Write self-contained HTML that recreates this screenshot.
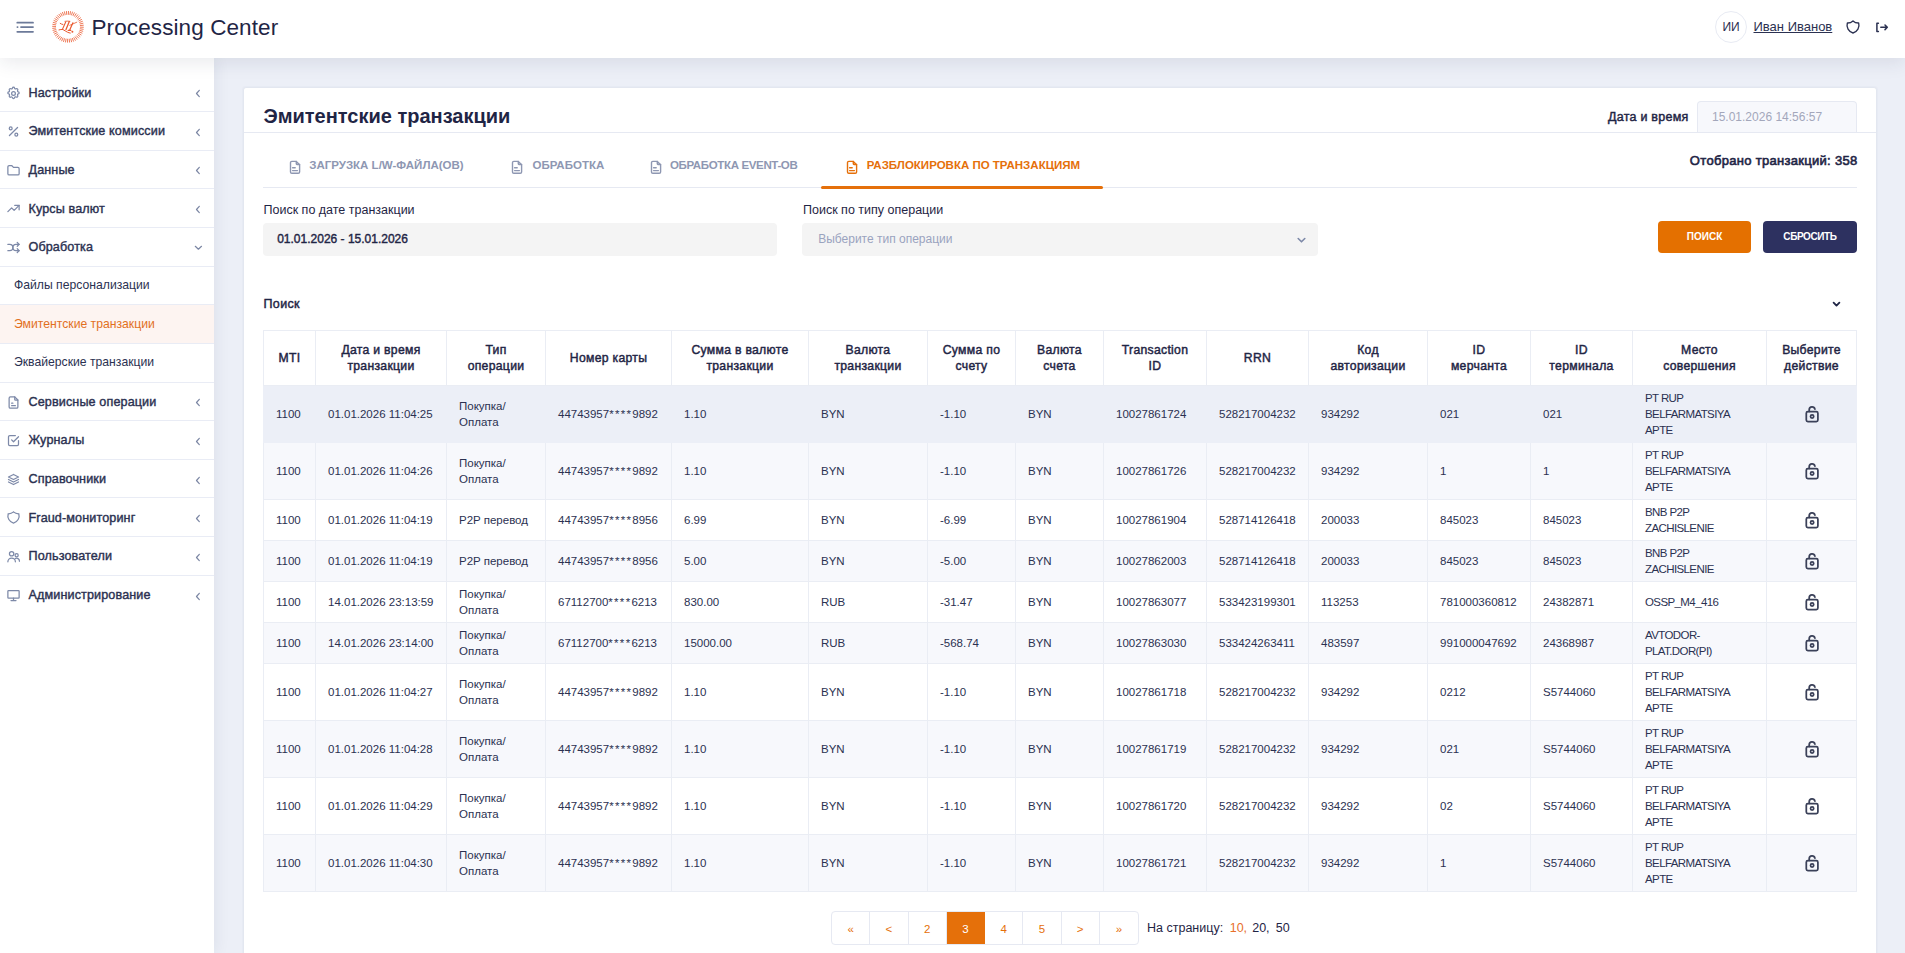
<!DOCTYPE html>
<html><head><meta charset="utf-8">
<style>
*{box-sizing:border-box;margin:0;padding:0}
html,body{width:1905px;height:953px;overflow:hidden}
body{font-family:"Liberation Sans",sans-serif;background:#eceff7;color:#2b3151;position:relative}
svg{display:block}
.abs{position:absolute}
.hdr{position:absolute;left:0;top:0;width:1905px;height:58px;background:#fff;z-index:3;box-shadow:0 4px 18px rgba(30,40,65,.10)}
.side{position:absolute;left:0;top:58px;width:214px;height:895px;background:#fff;z-index:2;box-shadow:2px 0 14px rgba(30,40,65,.07);padding-top:15.4px}
.si{position:relative;height:38.65px;border-bottom:1px solid #e9ecf5}
.si.last{border-bottom:none}
.si .ic{position:absolute;left:6px;top:12px}
.si .st{position:absolute;left:28.5px;top:1.2px;letter-spacing:.12px;line-height:37.65px;font-size:12.6px;font-weight:400;-webkit-text-stroke:.4px #2b3151;color:#2b3151;white-space:nowrap}
.si .chev{position:absolute;left:194.5px;top:15.8px}
.si .chevd{position:absolute;left:193.7px;top:16.8px}
.si.sub .sst{position:absolute;left:14px;top:0.5px;line-height:37.65px;font-size:12.2px;color:#2b3151;white-space:nowrap}
.si.act{background:#fdf4f1}
.si.act .sst{color:#e2701e}
.card{position:absolute;left:243px;top:87px;width:1634px;height:900px;background:#fff;border:1px solid #e3e7f0;border-radius:3px;box-shadow:0 0 0 1px rgba(228,232,241,.6)}
.chd{position:absolute;left:0;top:0;width:1632px;height:44.5px;border-bottom:1px solid #e6e9f2}
.title{position:absolute;left:19.5px;top:16px;font-size:20px;line-height:24px;font-weight:700;color:#1f2545;white-space:nowrap}
.dlab{position:absolute;left:1364px;top:21px;font-size:12.5px;letter-spacing:.25px;line-height:16px;font-weight:400;-webkit-text-stroke:.45px #1f2545;color:#1f2545;white-space:nowrap}
.dinp{position:absolute;left:1453px;top:13px;width:160px;height:31px;background:#f7f8fc;border:1px solid #e6e9f2;border-bottom:none;border-radius:4px 4px 0 0;font-size:12px;line-height:30px;padding-left:14px;color:#a3a7bb}
.tabs{position:absolute;left:19.5px;top:54px;width:1594px;height:47px;border-bottom:1px solid #e6e9f2;display:flex}
.tabt{position:absolute;top:69.1px;line-height:16px;font-size:11.5px;font-weight:700;white-space:nowrap}
.tabX{position:relative;height:46px;display:flex;align-items:center;padding:0 24.5px 0 25px;gap:7px;font-size:11.5px;font-weight:700;color:#8e97b2;white-space:nowrap}
.tab svg{margin-top:2px}
.tab.on{color:#e5700a}
.tab.on:after{content:"";position:absolute;left:0;right:0;bottom:-2px;height:3px;border-radius:2px;background:#e5700a}
.count{position:absolute;right:18.5px;top:65px;font-size:13px;letter-spacing:.3px;line-height:16px;font-weight:400;-webkit-text-stroke:.6px #1f2545;color:#1f2545;white-space:nowrap}
.flab{position:absolute;top:113.5px;font-size:12.5px;line-height:16px;color:#1f2545;white-space:nowrap}
.finp{position:absolute;top:135.1px;height:32.6px;background:#f4f4f4;border-radius:4px;font-size:12px;line-height:32.8px;white-space:nowrap}
.btn{position:absolute;top:133px;width:93px;height:32px;border-radius:4px;color:#fff;font-size:10px;font-weight:700;text-align:center;line-height:32px}
.ptitle{position:absolute;left:19.5px;top:208px;font-size:12.5px;letter-spacing:.35px;line-height:16px;font-weight:400;-webkit-text-stroke:.45px #1f2545;color:#1f2545}
.tbl{position:absolute;left:19px;top:242px;border-collapse:collapse;table-layout:fixed;width:1594px}
.tbl th,.tbl td{border:1px solid #eaedf4}
.tbl th{height:55px;font-size:12.2px;letter-spacing:.3px;line-height:16px;font-weight:400;-webkit-text-stroke:.45px #1f2545;color:#1f2545;text-align:center;padding:0 4px;background:#fff}
.tbl td{font-size:11.5px;line-height:16px;color:#2b3151;padding:0 12px;text-align:left;vertical-align:middle;white-space:nowrap}
.tbl tr.hov td{background:#eceff7;border-color:#eceff7}
.tbl tr.odd td{background:#f7f8fc}
.tbl tr.even td{background:#fff}
.tbl td.lk{padding:0}
.tbl td:nth-child(14){letter-spacing:-.6px}
.ast{letter-spacing:1.3px}
.pag{position:absolute;left:587px;top:823px;display:flex;height:34px;border:1px solid #e6e9f2;border-radius:4px}
.pag div{width:38.25px;height:32px;border-right:1px solid #e6e9f2;color:#e5700a;font-size:11.5px;line-height:34px;text-align:center}
.pag div:last-child{border-right:none}
.pag div.cur{background:#e5700a;color:#fff;border-color:#e5700a}
.per{position:absolute;top:832px;font-size:12.5px;line-height:16px;color:#1f2545;white-space:nowrap}
</style></head>
<body>
<div class="hdr">
  <svg class="abs" style="left:16px;top:21px" width="19" height="13" viewBox="0 0 19 13" fill="none" stroke="#6c7a99" stroke-width="1.8" stroke-linecap="round">
    <path d="M1.3 1.7H17M5 6.1H17M1.3 10.8H17M1.4 6.1H1.6"/>
  </svg>
  <svg class="abs" style="left:52px;top:11px" width="32" height="32" viewBox="0 0 32 32" fill="none" stroke="#ea5a30">
    <path d="M27.99 16.16L31.79 16.27M27.85 17.72L31.60 18.33M27.49 19.25L31.13 20.35M26.94 20.72L30.41 22.28M26.21 22.11L29.44 24.11M25.30 23.39L28.24 25.79M24.23 24.54L26.83 27.30M23.02 25.54L25.24 28.62M21.69 26.37L23.49 29.71M20.26 27.02L21.61 30.57M18.76 27.48L19.63 31.18M17.21 27.74L17.59 31.52M15.64 27.79L15.53 31.59M14.08 27.65L13.47 31.40M12.55 27.29L11.45 30.93M11.08 26.74L9.52 30.21M9.69 26.01L7.69 29.24M8.41 25.10L6.01 28.04M7.26 24.03L4.50 26.63M6.26 22.82L3.18 25.04M5.43 21.49L2.09 23.29M4.78 20.06L1.23 21.41M4.32 18.56L0.62 19.43M4.06 17.01L0.28 17.39M4.01 15.44L0.21 15.33M4.15 13.88L0.40 13.27M4.51 12.35L0.87 11.25M5.06 10.88L1.59 9.32M5.79 9.49L2.56 7.49M6.70 8.21L3.76 5.81M7.77 7.06L5.17 4.30M8.98 6.06L6.76 2.98M10.31 5.23L8.51 1.89M11.74 4.58L10.39 1.03M13.24 4.12L12.37 0.42M14.79 3.86L14.41 0.08M16.36 3.81L16.47 0.01M17.92 3.95L18.53 0.20M19.45 4.31L20.55 0.67M20.92 4.86L22.48 1.39M22.31 5.59L24.31 2.36M23.59 6.50L25.99 3.56M24.74 7.57L27.50 4.97M25.74 8.78L28.82 6.56M26.57 10.11L29.91 8.31M27.22 11.54L30.77 10.19M27.68 13.04L31.38 12.17M27.94 14.59L31.72 14.21" stroke-width="0.9" opacity=".9"/>
    <g stroke-linecap="round" stroke-linejoin="round">
    <path d="M8.2 12.4q1.3.9 2.7 1.1" stroke-width="1"/>
    <path d="M13 10.3c1.5-.3 3.2-.2 4.9 0" stroke-width=".9"/>
    <path d="M13.6 11.2L10.4 18.4" stroke-width="1.1"/>
    <path d="M17.3 10.6L14 18.6" stroke-width="1.3"/>
    <path d="M20.9 11.8L17.6 19.3M16.2 19.4h2.6" stroke-width="1.2"/>
    <path d="M17.8 14.3L24.8 11.2" stroke-width=".8"/>
    <path d="M7 18.9c1.3-.4 2.6-.6 3.9-.4 1.6.8 3 2 4.6 2.7 1 .4 1.9.8 2.8.9" stroke-width="1"/>
    <circle cx="20.4" cy="20.7" r="1" fill="#ea5a30" stroke="none"/>
    </g>
  </svg>
  <div class="abs" style="left:91.5px;top:14.5px;font-size:22.5px;line-height:26px;letter-spacing:.1px;color:#1f2545">Processing Center</div>
  <div class="abs" style="left:1715px;top:11px;width:32px;height:32px;border:1px solid #e8ebf3;border-radius:50%;font-size:12px;line-height:30px;text-align:center;color:#2b3151">ИИ</div>
  <div class="abs" style="left:1753.5px;top:19px;font-size:13px;line-height:16px;color:#2b3151;text-decoration:underline;white-space:nowrap">Иван Иванов</div>
  <svg class="abs" style="left:1845px;top:19px" width="16" height="16" viewBox="0 0 24 24" fill="none" stroke="#2b3151" stroke-width="2" stroke-linecap="round" stroke-linejoin="round"><path d="M12 3a12 12 0 0 0 8.5 3A12 12 0 0 1 12 21 12 12 0 0 1 3.5 6 12 12 0 0 0 12 3"/></svg>
  <svg class="abs" style="left:1875px;top:20px" width="15" height="14" viewBox="0 0 15 14" fill="none" stroke="#2b3151" stroke-width="1.5" stroke-linecap="round" stroke-linejoin="round"><path d="M3.4 3.2H1.9v8.3h1.5M5.8 7.3h6.4M10 5l2.3 2.3-2.3 2.3"/></svg>
</div>
<div class="side">
<div class="si"><span class="ic" style="top:13px"><svg width="15" height="15" viewBox="0 0 24 24" fill="none" stroke="#7d89a8" stroke-width="2" stroke-linecap="round" stroke-linejoin="round" ><path d="M10.3 3.3c.4-1.8 3-1.8 3.4 0a1.7 1.7 0 0 0 2.6 1.1c1.5-.9 3.3.8 2.4 2.4a1.7 1.7 0 0 0 1 2.5c1.8.4 1.8 3 0 3.4a1.7 1.7 0 0 0-1 2.6c.9 1.5-.8 3.3-2.4 2.4a1.7 1.7 0 0 0-2.6 1c-.4 1.8-3 1.8-3.4 0a1.7 1.7 0 0 0-2.5-1c-1.6.9-3.3-.8-2.4-2.4a1.7 1.7 0 0 0-1.1-2.6c-1.8-.4-1.8-3 0-3.4a1.7 1.7 0 0 0 1.1-2.5c-.9-1.6.8-3.3 2.4-2.4 1 .6 2.3.1 2.5-1.1z"/><circle cx="12" cy="12" r="3"/></svg></span><span class="st">Настройки</span><svg class="chev" width="6" height="9" viewBox="0 0 6 9" fill="none" stroke="#7b86a3" stroke-width="1.2" stroke-linecap="round" stroke-linejoin="round"><path d="M4.3 1.3L1.5 4.5l2.8 3.1"/></svg></div>
<div class="si"><span class="ic"><svg width="15" height="15" viewBox="0 0 24 24" fill="none" stroke="#7d89a8" stroke-width="2" stroke-linecap="round" stroke-linejoin="round" ><path d="M18.5 5.5L5.5 18.5"/><circle cx="7.5" cy="7" r="2.3"/><circle cx="16.5" cy="17" r="2.3"/></svg></span><span class="st">Эмитентские комиссии</span><svg class="chev" width="6" height="9" viewBox="0 0 6 9" fill="none" stroke="#7b86a3" stroke-width="1.2" stroke-linecap="round" stroke-linejoin="round"><path d="M4.3 1.3L1.5 4.5l2.8 3.1"/></svg></div>
<div class="si"><span class="ic"><svg width="15" height="15" viewBox="0 0 24 24" fill="none" stroke="#7d89a8" stroke-width="2" stroke-linecap="round" stroke-linejoin="round" ><path d="M5 4h4l3 3h7a2 2 0 0 1 2 2v8a2 2 0 0 1-2 2H5a2 2 0 0 1-2-2V6a2 2 0 0 1 2-2"/></svg></span><span class="st">Данные</span><svg class="chev" width="6" height="9" viewBox="0 0 6 9" fill="none" stroke="#7b86a3" stroke-width="1.2" stroke-linecap="round" stroke-linejoin="round"><path d="M4.3 1.3L1.5 4.5l2.8 3.1"/></svg></div>
<div class="si"><span class="ic"><svg width="15" height="15" viewBox="0 0 24 24" fill="none" stroke="#7d89a8" stroke-width="2" stroke-linecap="round" stroke-linejoin="round" ><path d="M3 17l6-6 4 4 8-8"/><path d="M14 7h7v7"/></svg></span><span class="st">Курсы валют</span><svg class="chev" width="6" height="9" viewBox="0 0 6 9" fill="none" stroke="#7b86a3" stroke-width="1.2" stroke-linecap="round" stroke-linejoin="round"><path d="M4.3 1.3L1.5 4.5l2.8 3.1"/></svg></div>
<div class="si"><span class="ic"><svg width="15" height="15" viewBox="0 0 24 24" fill="none" stroke="#7d89a8" stroke-width="2" stroke-linecap="round" stroke-linejoin="round" ><path d="M18 4l3 3-3 3"/><path d="M18 20l3-3-3-3"/><path d="M3 7h3a5 5 0 0 1 5 5 5 5 0 0 0 5 5h5"/><path d="M3 17h3a5 5 0 0 0 5-5 5 5 0 0 1 5-5h5"/></svg></span><span class="st">Обработка</span><svg class="chevd" width="9" height="6" viewBox="0 0 9 6" fill="none" stroke="#7b86a3" stroke-width="1.2" stroke-linecap="round" stroke-linejoin="round"><path d="M1.3 1.3l3.1 2.9 3.1-2.9"/></svg></div>
<div class="si sub"><span class="sst">Файлы персонализации</span></div>
<div class="si sub act"><span class="sst">Эмитентские транзакции</span></div>
<div class="si sub"><span class="sst">Эквайерские транзакции</span></div>
<div class="si"><span class="ic"><svg width="15" height="15" viewBox="0 0 24 24" fill="none" stroke="#7d89a8" stroke-width="2" stroke-linecap="round" stroke-linejoin="round" ><path d="M14 3v4a1 1 0 0 0 1 1h4"/><path d="M17 21H7a2 2 0 0 1-2-2V5a2 2 0 0 1 2-2h7l5 5v11a2 2 0 0 1-2 2z"/><path d="M9 13h2M9 17h6"/></svg></span><span class="st">Сервисные операции</span><svg class="chev" width="6" height="9" viewBox="0 0 6 9" fill="none" stroke="#7b86a3" stroke-width="1.2" stroke-linecap="round" stroke-linejoin="round"><path d="M4.3 1.3L1.5 4.5l2.8 3.1"/></svg></div>
<div class="si"><span class="ic"><svg width="15" height="15" viewBox="0 0 24 24" fill="none" stroke="#7d89a8" stroke-width="2" stroke-linecap="round" stroke-linejoin="round" ><path d="M9 11l3 3 8-8"/><path d="M20 12v6a2 2 0 0 1-2 2H6a2 2 0 0 1-2-2V6a2 2 0 0 1 2-2h9"/></svg></span><span class="st">Журналы</span><svg class="chev" width="6" height="9" viewBox="0 0 6 9" fill="none" stroke="#7b86a3" stroke-width="1.2" stroke-linecap="round" stroke-linejoin="round"><path d="M4.3 1.3L1.5 4.5l2.8 3.1"/></svg></div>
<div class="si"><span class="ic"><svg width="15" height="15" viewBox="0 0 24 24" fill="none" stroke="#7d89a8" stroke-width="2" stroke-linecap="round" stroke-linejoin="round" ><path d="M12 4L4 8l8 4 8-4-8-4"/><path d="M4 12l8 4 8-4"/><path d="M4 16l8 4 8-4"/></svg></span><span class="st">Справочники</span><svg class="chev" width="6" height="9" viewBox="0 0 6 9" fill="none" stroke="#7b86a3" stroke-width="1.2" stroke-linecap="round" stroke-linejoin="round"><path d="M4.3 1.3L1.5 4.5l2.8 3.1"/></svg></div>
<div class="si"><span class="ic"><svg width="15" height="15" viewBox="0 0 24 24" fill="none" stroke="#7d89a8" stroke-width="2" stroke-linecap="round" stroke-linejoin="round" ><path d="M12 3a12 12 0 0 0 8.5 3A12 12 0 0 1 12 21 12 12 0 0 1 3.5 6 12 12 0 0 0 12 3"/></svg></span><span class="st">Fraud-мониторинг</span><svg class="chev" width="6" height="9" viewBox="0 0 6 9" fill="none" stroke="#7b86a3" stroke-width="1.2" stroke-linecap="round" stroke-linejoin="round"><path d="M4.3 1.3L1.5 4.5l2.8 3.1"/></svg></div>
<div class="si"><span class="ic"><svg width="15" height="15" viewBox="0 0 24 24" fill="none" stroke="#7d89a8" stroke-width="2" stroke-linecap="round" stroke-linejoin="round" ><circle cx="9" cy="7.5" r="3.5"/><circle cx="17" cy="10" r="2.5"/><path d="M3 20.5a6 6 0 0 1 12 0"/><path d="M14.5 15.6a4.5 4.5 0 0 1 7 4"/></svg></span><span class="st">Пользователи</span><svg class="chev" width="6" height="9" viewBox="0 0 6 9" fill="none" stroke="#7b86a3" stroke-width="1.2" stroke-linecap="round" stroke-linejoin="round"><path d="M4.3 1.3L1.5 4.5l2.8 3.1"/></svg></div>
<div class="si last"><span class="ic"><svg width="15" height="15" viewBox="0 0 24 24" fill="none" stroke="#7d89a8" stroke-width="2" stroke-linecap="round" stroke-linejoin="round" ><path d="M3 5a1 1 0 0 1 1-1h16a1 1 0 0 1 1 1v10a1 1 0 0 1-1 1H4a1 1 0 0 1-1-1V5z"/><path d="M8 20h8M12 16v4"/></svg></span><span class="st">Администрирование</span><svg class="chev" width="6" height="9" viewBox="0 0 6 9" fill="none" stroke="#7b86a3" stroke-width="1.2" stroke-linecap="round" stroke-linejoin="round"><path d="M4.3 1.3L1.5 4.5l2.8 3.1"/></svg></div>
</div>
<div class="card">
  <div class="chd">
    <div class="title">Эмитентские транзакции</div>
    <div class="dlab">Дата и время</div>
    <div class="dinp">15.01.2026 14:56:57</div>
  </div>
  <div class="abs" style="left:44.15px;top:71.5px"><svg width="14" height="16" viewBox="0 0 14 16" fill="none" stroke="#8e97b2" stroke-width="1.4" stroke-linecap="round" stroke-linejoin="round"><path d="M8.3 1.4v2.4c0 .4.3.7.7.7h2.6"/><path d="M10.2 13.2H3.8c-.7 0-1.3-.6-1.3-1.3V2.7c0-.7.6-1.3 1.3-1.3h4.5l3.3 3.3v7.2c0 .7-.6 1.3-1.4 1.3z"/><path d="M4.6 7.8h2.6M4.6 10.6h4.8"/></svg></div><div class="tabt" style="left:65.20px;color:#8e97b2;letter-spacing:0px">ЗАГРУЗКА L/W-ФАЙЛА(ОВ)</div><div class="abs" style="left:265.95px;top:71.5px"><svg width="14" height="16" viewBox="0 0 14 16" fill="none" stroke="#8e97b2" stroke-width="1.4" stroke-linecap="round" stroke-linejoin="round"><path d="M8.3 1.4v2.4c0 .4.3.7.7.7h2.6"/><path d="M10.2 13.2H3.8c-.7 0-1.3-.6-1.3-1.3V2.7c0-.7.6-1.3 1.3-1.3h4.5l3.3 3.3v7.2c0 .7-.6 1.3-1.4 1.3z"/><path d="M4.6 7.8h2.6M4.6 10.6h4.8"/></svg></div><div class="tabt" style="left:288.50px;color:#8e97b2;letter-spacing:0px">ОБРАБОТКА</div><div class="abs" style="left:404.75px;top:71.5px"><svg width="14" height="16" viewBox="0 0 14 16" fill="none" stroke="#8e97b2" stroke-width="1.4" stroke-linecap="round" stroke-linejoin="round"><path d="M8.3 1.4v2.4c0 .4.3.7.7.7h2.6"/><path d="M10.2 13.2H3.8c-.7 0-1.3-.6-1.3-1.3V2.7c0-.7.6-1.3 1.3-1.3h4.5l3.3 3.3v7.2c0 .7-.6 1.3-1.4 1.3z"/><path d="M4.6 7.8h2.6M4.6 10.6h4.8"/></svg></div><div class="tabt" style="left:426.00px;color:#8e97b2;letter-spacing:-0.35px">ОБРАБОТКА EVENT-ОВ</div><div class="abs" style="left:601.15px;top:71.5px"><svg width="14" height="16" viewBox="0 0 14 16" fill="none" stroke="#e5700a" stroke-width="1.4" stroke-linecap="round" stroke-linejoin="round"><path d="M8.3 1.4v2.4c0 .4.3.7.7.7h2.6"/><path d="M10.2 13.2H3.8c-.7 0-1.3-.6-1.3-1.3V2.7c0-.7.6-1.3 1.3-1.3h4.5l3.3 3.3v7.2c0 .7-.6 1.3-1.4 1.3z"/><path d="M4.6 7.8h2.6M4.6 10.6h4.8"/></svg></div><div class="tabt" style="left:622.70px;color:#e5700a;letter-spacing:0px">РАЗБЛОКИРОВКА ПО ТРАНЗАКЦИЯМ</div><div class="abs" style="left:19px;top:99px;width:1594px;height:1px;background:#e6e9f2"></div><div class="abs" style="left:577px;top:98px;width:282px;height:3px;border-radius:2px;background:#e5700a"></div>
  <div class="count">Отобрано транзакций: 358</div>
  <div class="flab" style="left:19.5px">Поиск по дате транзакции</div>
  <div class="finp" style="left:19.2px;width:514px;padding-left:14px;-webkit-text-stroke:.4px #1f2545;color:#1f2545">01.01.2026 - 15.01.2026</div>
  <div class="flab" style="left:559px">Поиск по типу операции</div>
  <div class="finp" style="left:558.2px;width:515.6px;padding-left:16px;color:#9aa3bf">Выберите тип операции
    <svg class="abs" style="left:495px;top:13.5px" width="10" height="7" viewBox="0 0 10 7" fill="none" stroke="#7d89a8" stroke-width="1.6" stroke-linecap="round" stroke-linejoin="round"><path d="M1.2 1.5L4.5 4.8l3.3-3.3"/></svg>
  </div>
  <div class="btn" style="left:1414px;background:#e47000">ПОИСК</div>
  <div class="btn" style="left:1519.2px;width:93.6px;background:#2d3160;letter-spacing:-.4px">СБРОСИТЬ</div>
  <div class="ptitle">Поиск</div>
  <svg class="abs" style="left:1588px;top:213px" width="9" height="7" viewBox="0 0 9 7" fill="none" stroke="#1f2545" stroke-width="1.8" stroke-linecap="round" stroke-linejoin="round"><path d="M1.6 1.6L4.5 4.6l2.9-3"/></svg>
  <table class="tbl"><colgroup><col style="width:52px"><col style="width:131px"><col style="width:99px"><col style="width:126px"><col style="width:137px"><col style="width:119px"><col style="width:88px"><col style="width:88px"><col style="width:103px"><col style="width:102px"><col style="width:119px"><col style="width:103px"><col style="width:102px"><col style="width:134px"><col style="width:90px"></colgroup>
  <thead><tr><th>MTI</th><th>Дата и время<br>транзакции</th><th>Тип<br>операции</th><th>Номер карты</th><th>Сумма в валюте<br>транзакции</th><th>Валюта<br>транзакции</th><th>Сумма по<br>счету</th><th>Валюта<br>счета</th><th>Transaction<br>ID</th><th>RRN</th><th>Код<br>авторизации</th><th>ID<br>мерчанта</th><th>ID<br>терминала</th><th>Место<br>совершения</th><th>Выберите<br>действие</th></tr></thead>
  <tbody>
<tr class="hov" style="height:57px"><td>1100</td><td>01.01.2026 11:04:25</td><td>Покупка/<br>Оплата</td><td>44743957<span class=ast>****</span>9892</td><td>1.10</td><td>BYN</td><td>-1.10</td><td>BYN</td><td>10027861724</td><td>528217004232</td><td>934292</td><td>021</td><td>021</td><td>PT RUP<br>BELFARMATSIYA<br>APTE</td><td class="lk"><svg width="16" height="18" viewBox="0 0 16 18" fill="none" stroke="#3b4159" stroke-width="1.75" stroke-linecap="round" stroke-linejoin="round" style="margin:auto"><rect x="2.3" y="6.6" width="11.6" height="9.9" rx="1.6"/><circle cx="8.1" cy="11.5" r="1.6"/><path d="M5.2 6.4V4.6a2.9 2.9 0 0 1 5.7-.5"/></svg></td></tr>
<tr class="odd" style="height:57px"><td>1100</td><td>01.01.2026 11:04:26</td><td>Покупка/<br>Оплата</td><td>44743957<span class=ast>****</span>9892</td><td>1.10</td><td>BYN</td><td>-1.10</td><td>BYN</td><td>10027861726</td><td>528217004232</td><td>934292</td><td>1</td><td>1</td><td>PT RUP<br>BELFARMATSIYA<br>APTE</td><td class="lk"><svg width="16" height="18" viewBox="0 0 16 18" fill="none" stroke="#3b4159" stroke-width="1.75" stroke-linecap="round" stroke-linejoin="round" style="margin:auto"><rect x="2.3" y="6.6" width="11.6" height="9.9" rx="1.6"/><circle cx="8.1" cy="11.5" r="1.6"/><path d="M5.2 6.4V4.6a2.9 2.9 0 0 1 5.7-.5"/></svg></td></tr>
<tr class="even" style="height:41px"><td>1100</td><td>01.01.2026 11:04:19</td><td>P2P перевод</td><td>44743957<span class=ast>****</span>8956</td><td>6.99</td><td>BYN</td><td>-6.99</td><td>BYN</td><td>10027861904</td><td>528714126418</td><td>200033</td><td>845023</td><td>845023</td><td>BNB P2P<br>ZACHISLENIE</td><td class="lk"><svg width="16" height="18" viewBox="0 0 16 18" fill="none" stroke="#3b4159" stroke-width="1.75" stroke-linecap="round" stroke-linejoin="round" style="margin:auto"><rect x="2.3" y="6.6" width="11.6" height="9.9" rx="1.6"/><circle cx="8.1" cy="11.5" r="1.6"/><path d="M5.2 6.4V4.6a2.9 2.9 0 0 1 5.7-.5"/></svg></td></tr>
<tr class="odd" style="height:41px"><td>1100</td><td>01.01.2026 11:04:19</td><td>P2P перевод</td><td>44743957<span class=ast>****</span>8956</td><td>5.00</td><td>BYN</td><td>-5.00</td><td>BYN</td><td>10027862003</td><td>528714126418</td><td>200033</td><td>845023</td><td>845023</td><td>BNB P2P<br>ZACHISLENIE</td><td class="lk"><svg width="16" height="18" viewBox="0 0 16 18" fill="none" stroke="#3b4159" stroke-width="1.75" stroke-linecap="round" stroke-linejoin="round" style="margin:auto"><rect x="2.3" y="6.6" width="11.6" height="9.9" rx="1.6"/><circle cx="8.1" cy="11.5" r="1.6"/><path d="M5.2 6.4V4.6a2.9 2.9 0 0 1 5.7-.5"/></svg></td></tr>
<tr class="even" style="height:41px"><td>1100</td><td>14.01.2026 23:13:59</td><td>Покупка/<br>Оплата</td><td>67112700<span class=ast>****</span>6213</td><td>830.00</td><td>RUB</td><td>-31.47</td><td>BYN</td><td>10027863077</td><td>533423199301</td><td>113253</td><td>781000360812</td><td>24382871</td><td>OSSP_M4_416</td><td class="lk"><svg width="16" height="18" viewBox="0 0 16 18" fill="none" stroke="#3b4159" stroke-width="1.75" stroke-linecap="round" stroke-linejoin="round" style="margin:auto"><rect x="2.3" y="6.6" width="11.6" height="9.9" rx="1.6"/><circle cx="8.1" cy="11.5" r="1.6"/><path d="M5.2 6.4V4.6a2.9 2.9 0 0 1 5.7-.5"/></svg></td></tr>
<tr class="odd" style="height:41px"><td>1100</td><td>14.01.2026 23:14:00</td><td>Покупка/<br>Оплата</td><td>67112700<span class=ast>****</span>6213</td><td>15000.00</td><td>RUB</td><td>-568.74</td><td>BYN</td><td>10027863030</td><td>533424263411</td><td>483597</td><td>991000047692</td><td>24368987</td><td>AVTODOR-<br>PLAT.DOR(PI)</td><td class="lk"><svg width="16" height="18" viewBox="0 0 16 18" fill="none" stroke="#3b4159" stroke-width="1.75" stroke-linecap="round" stroke-linejoin="round" style="margin:auto"><rect x="2.3" y="6.6" width="11.6" height="9.9" rx="1.6"/><circle cx="8.1" cy="11.5" r="1.6"/><path d="M5.2 6.4V4.6a2.9 2.9 0 0 1 5.7-.5"/></svg></td></tr>
<tr class="even" style="height:57px"><td>1100</td><td>01.01.2026 11:04:27</td><td>Покупка/<br>Оплата</td><td>44743957<span class=ast>****</span>9892</td><td>1.10</td><td>BYN</td><td>-1.10</td><td>BYN</td><td>10027861718</td><td>528217004232</td><td>934292</td><td>0212</td><td>S5744060</td><td>PT RUP<br>BELFARMATSIYA<br>APTE</td><td class="lk"><svg width="16" height="18" viewBox="0 0 16 18" fill="none" stroke="#3b4159" stroke-width="1.75" stroke-linecap="round" stroke-linejoin="round" style="margin:auto"><rect x="2.3" y="6.6" width="11.6" height="9.9" rx="1.6"/><circle cx="8.1" cy="11.5" r="1.6"/><path d="M5.2 6.4V4.6a2.9 2.9 0 0 1 5.7-.5"/></svg></td></tr>
<tr class="odd" style="height:57px"><td>1100</td><td>01.01.2026 11:04:28</td><td>Покупка/<br>Оплата</td><td>44743957<span class=ast>****</span>9892</td><td>1.10</td><td>BYN</td><td>-1.10</td><td>BYN</td><td>10027861719</td><td>528217004232</td><td>934292</td><td>021</td><td>S5744060</td><td>PT RUP<br>BELFARMATSIYA<br>APTE</td><td class="lk"><svg width="16" height="18" viewBox="0 0 16 18" fill="none" stroke="#3b4159" stroke-width="1.75" stroke-linecap="round" stroke-linejoin="round" style="margin:auto"><rect x="2.3" y="6.6" width="11.6" height="9.9" rx="1.6"/><circle cx="8.1" cy="11.5" r="1.6"/><path d="M5.2 6.4V4.6a2.9 2.9 0 0 1 5.7-.5"/></svg></td></tr>
<tr class="even" style="height:57px"><td>1100</td><td>01.01.2026 11:04:29</td><td>Покупка/<br>Оплата</td><td>44743957<span class=ast>****</span>9892</td><td>1.10</td><td>BYN</td><td>-1.10</td><td>BYN</td><td>10027861720</td><td>528217004232</td><td>934292</td><td>02</td><td>S5744060</td><td>PT RUP<br>BELFARMATSIYA<br>APTE</td><td class="lk"><svg width="16" height="18" viewBox="0 0 16 18" fill="none" stroke="#3b4159" stroke-width="1.75" stroke-linecap="round" stroke-linejoin="round" style="margin:auto"><rect x="2.3" y="6.6" width="11.6" height="9.9" rx="1.6"/><circle cx="8.1" cy="11.5" r="1.6"/><path d="M5.2 6.4V4.6a2.9 2.9 0 0 1 5.7-.5"/></svg></td></tr>
<tr class="odd" style="height:57px"><td>1100</td><td>01.01.2026 11:04:30</td><td>Покупка/<br>Оплата</td><td>44743957<span class=ast>****</span>9892</td><td>1.10</td><td>BYN</td><td>-1.10</td><td>BYN</td><td>10027861721</td><td>528217004232</td><td>934292</td><td>1</td><td>S5744060</td><td>PT RUP<br>BELFARMATSIYA<br>APTE</td><td class="lk"><svg width="16" height="18" viewBox="0 0 16 18" fill="none" stroke="#3b4159" stroke-width="1.75" stroke-linecap="round" stroke-linejoin="round" style="margin:auto"><rect x="2.3" y="6.6" width="11.6" height="9.9" rx="1.6"/><circle cx="8.1" cy="11.5" r="1.6"/><path d="M5.2 6.4V4.6a2.9 2.9 0 0 1 5.7-.5"/></svg></td></tr>
  </tbody></table>
  <div class="pag"><div>«</div><div>&lt;</div><div>2</div><div class="cur">3</div><div>4</div><div>5</div><div>&gt;</div><div>»</div></div>
  <div class="per" style="left:903px">На страницу:</div><div class="per" style="left:985.7px;color:#e8702a">10,</div><div class="per" style="left:1008.2px">20,</div><div class="per" style="left:1031.7px">50</div>
</div>
</body></html>
